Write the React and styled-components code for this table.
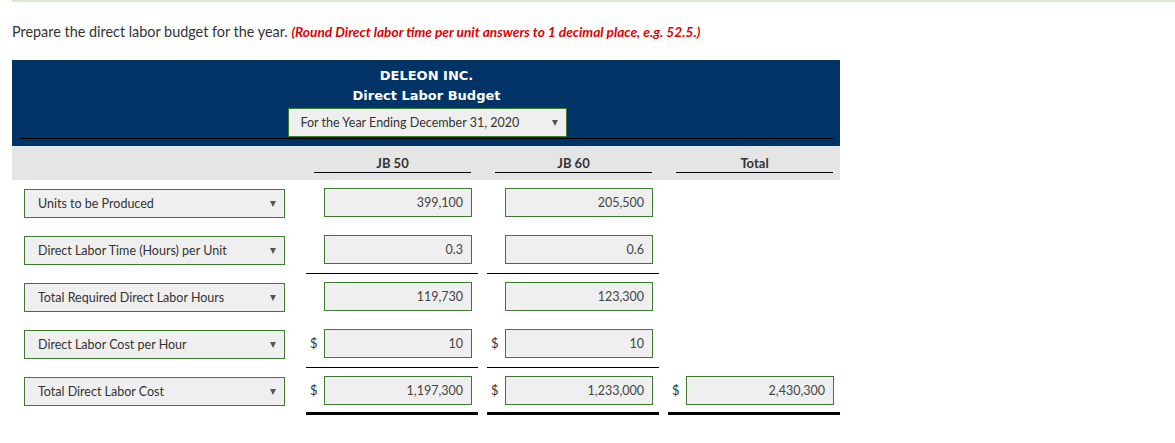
import styled, { createGlobalStyle } from "styled-components";

const GlobalStyle = createGlobalStyle`
  body {
    margin: 0;
    background: #fff;
    font-family: Lato, "Open Sans", Arial, sans-serif;
    color: #333;
  }
`;

const Page = styled.div`
  width: 1175px;
  height: 443px;
  overflow: hidden;
`;

const TopRule = styled.div`
  margin-left: 12px;
  height: 2px;
  background: #d7ebcc;
`;

const Prompt = styled.p`
  margin: 21px 0 0 12px;
  font-size: 14.4px;
  line-height: 18px;
  color: #333;
`;

const Hint = styled.span`
  color: #e00000;
  font-weight: 700;
  font-style: italic;
  font-size: 13.7px;
`;

const Table = styled.div`
  margin: 19px 0 0 12px;
  width: 828px;
`;

const Banner = styled.div`
  background: #003366;
  height: 86px;
  padding: 0 7px 0 8px;
  display: flex;
  flex-direction: column;
  align-items: center;
`;

const Title = styled.div`
  font-family: "DejaVu Sans", Verdana, sans-serif;
  font-weight: 700;
  font-size: 13px;
  line-height: 20px;
  color: #fff;
  text-align: center;
  margin-top: ${(p) => p.$top || 0}px;
`;

const PeriodSelect = styled.div`
  margin-top: 2px;
  margin-left: 1px;
  width: 279px;
  height: 29px;
  box-sizing: border-box;
  border: 1px solid #3f7a32;
  background: #efefef;
  display: flex;
  align-items: center;
  justify-content: space-between;
  padding: 0 8px 0 12px;
  font-size: 12.5px;
  color: #333;
`;

const Arrow = styled.span`
  width: 0;
  height: 0;
  border-left: 3.5px solid transparent;
  border-right: 3.5px solid transparent;
  border-top: 6px solid #555;
`;

const BannerRule = styled.div`
  align-self: stretch;
  margin-top: 1px;
  height: 1px;
  background: #000;
`;

const Grid = styled.div`
  display: grid;
  grid-template-columns: 285px 172px 172px 172px;
  column-gap: 9px;
`;

const HeadBand = styled(Grid)`
  background: #e5e5e5;
  height: 34px;
`;

const HeadCell = styled.div`
  margin: 0 7px 0 8px;
  height: 27px;
  border-bottom: 1px solid #000;
  box-sizing: border-box;
  font-size: 13px;
  font-weight: 700;
  color: #333;
  display: flex;
  align-items: flex-end;
  justify-content: center;
  padding-bottom: 1px;
`;

const BodyRow = styled(Grid)`
  height: 47px;
  align-items: stretch;
`;

const LabelCell = styled.div`
  padding: 9px 12px 0 12px;
`;

const LabelSelect = styled.div`
  height: 29px;
  box-sizing: border-box;
  border: 1px solid #3f7a32;
  background: #efefef;
  display: flex;
  align-items: center;
  justify-content: space-between;
  padding: 0 8px 0 13px;
  font-size: 12.5px;
  color: #333;
`;

const ValueCell = styled.div`
  box-sizing: border-box;
  padding: 8px 6px 0 4px;
  display: flex;
  align-items: flex-start;
  border-bottom: ${(p) =>
    p.$rule === "double" ? "3px solid #000" : p.$rule ? "1px solid #000" : "1px solid transparent"};
`;

const Dollar = styled.span`
  width: 14px;
  font-size: 13px;
  line-height: 29px;
  color: #333;
`;

const Input = styled.div`
  margin-left: auto;
  width: 148px;
  height: 29px;
  box-sizing: border-box;
  border: 1px solid #3f7a32;
  background: #efefef;
  display: flex;
  align-items: center;
  justify-content: flex-end;
  padding-right: 8px;
  font-size: 12.5px;
  color: #444;
`;

const rows = [
  { label: "Units to be Produced", values: ["399,100", "205,500"] },
  { label: "Direct Labor Time (Hours) per Unit", values: ["0.3", "0.6"], rule: "single" },
  { label: "Total Required Direct Labor Hours", values: ["119,730", "123,300"] },
  { label: "Direct Labor Cost per Hour", values: ["10", "10"], dollar: true, rule: "single" },
  {
    label: "Total Direct Labor Cost",
    values: ["1,197,300", "1,233,000", "2,430,300"],
    dollar: true,
    rule: "double",
  },
];

export default function App() {
  return (
    <Page>
      <GlobalStyle />
      <TopRule />
      <Prompt>
        Prepare the direct labor budget for the year.{" "}
        <Hint>(Round Direct labor time per unit answers to 1 decimal place, e.g. 52.5.)</Hint>
      </Prompt>
      <Table>
        <Banner>
          <Title $top={6}>DELEON INC.</Title>
          <Title>Direct Labor Budget</Title>
          <PeriodSelect>
            For the Year Ending December 31, 2020
            <Arrow />
          </PeriodSelect>
          <BannerRule />
        </Banner>
        <HeadBand>
          <div />
          <HeadCell>JB 50</HeadCell>
          <HeadCell>JB 60</HeadCell>
          <HeadCell>Total</HeadCell>
        </HeadBand>
        {rows.map((row) => (
          <BodyRow key={row.label}>
            <LabelCell>
              <LabelSelect>
                {row.label}
                <Arrow />
              </LabelSelect>
            </LabelCell>
            {[0, 1, 2].map((i) =>
              row.values[i] !== undefined ? (
                <ValueCell key={i} $rule={row.rule}>
                  {row.dollar && <Dollar>$</Dollar>}
                  <Input>{row.values[i]}</Input>
                </ValueCell>
              ) : (
                <div key={i} />
              )
            )}
          </BodyRow>
        ))}
      </Table>
    </Page>
  );
}
